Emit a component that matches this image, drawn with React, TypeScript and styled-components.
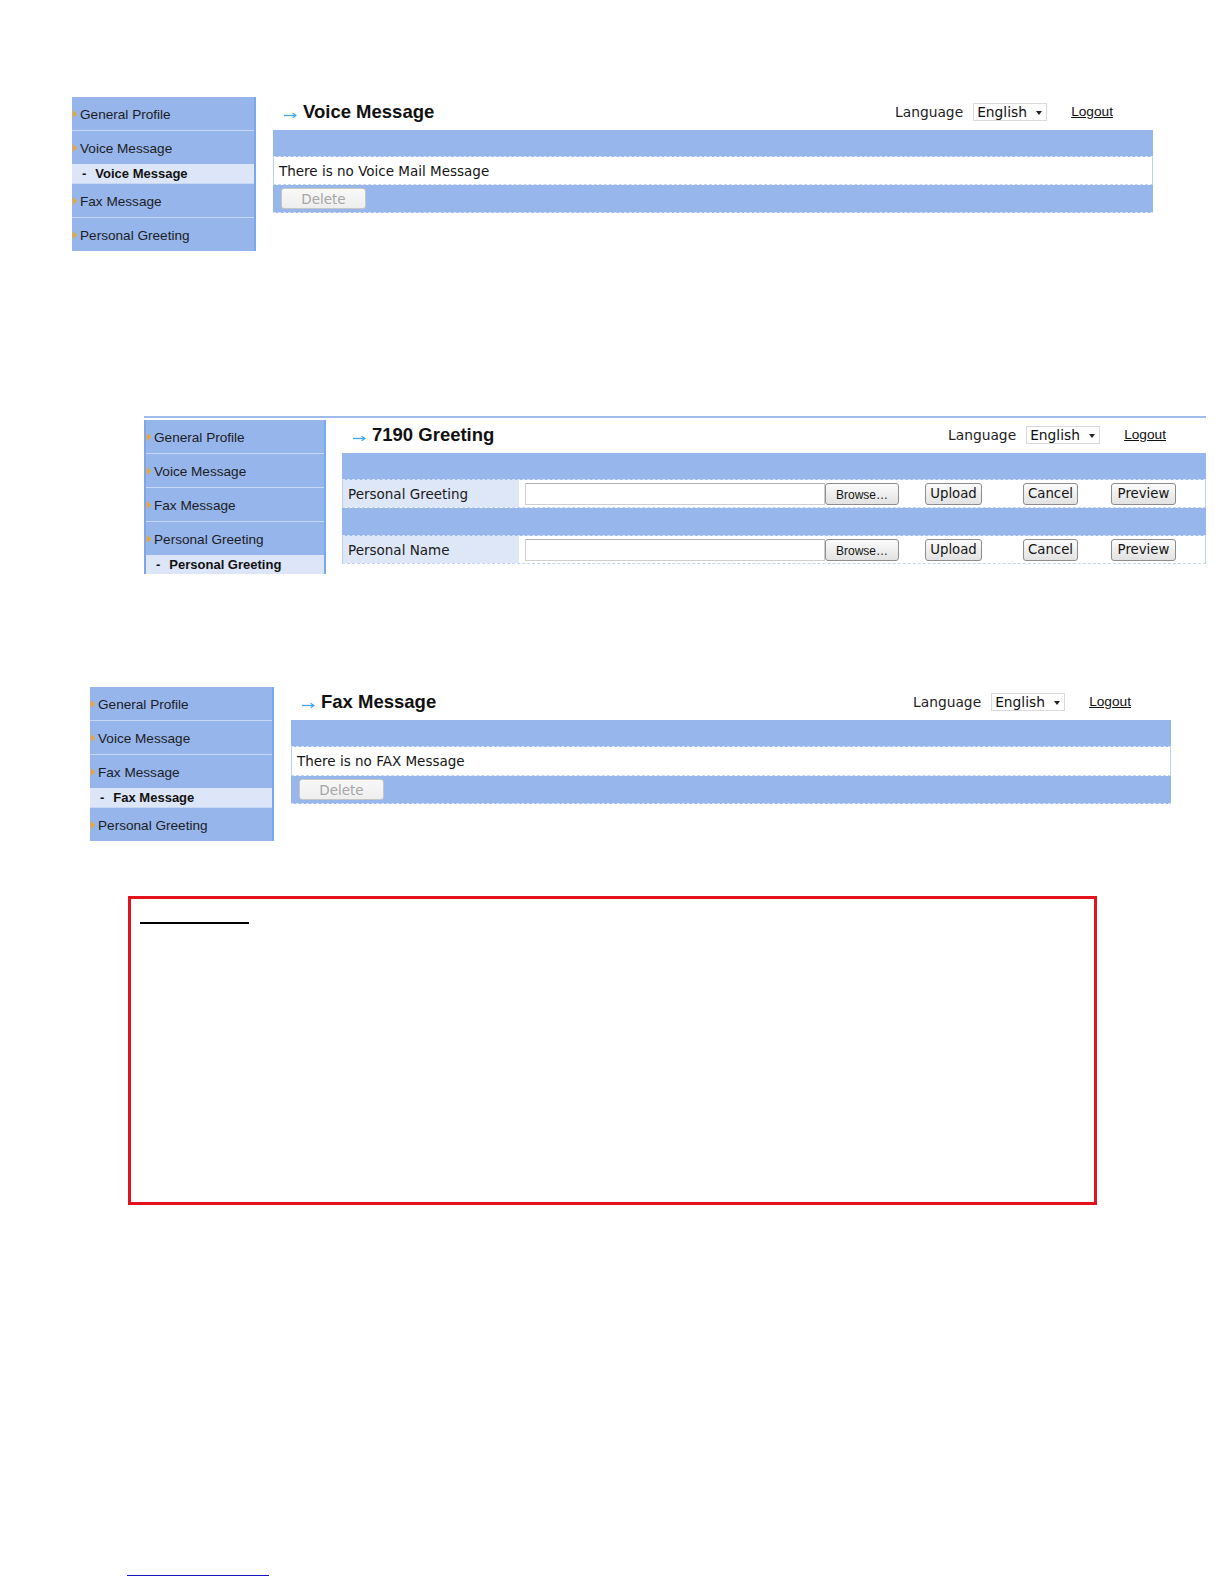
import styled, { createGlobalStyle } from "styled-components";

const GlobalStyle = createGlobalStyle`
  body {
    margin: 0;
    background: #ffffff;
    font-family: "DejaVu Sans", Verdana, sans-serif;
    color: #1a1a1a;
  }
`;

type MenuName = "General Profile" | "Voice Message" | "Fax Message" | "Personal Greeting";

const menu: MenuName[] = ["General Profile", "Voice Message", "Fax Message", "Personal Greeting"];

function App() {
  return (
    <Page>
      <GlobalStyle />

      <Panel $top={97} $left={72} $width={1081}>
        <SideMenu open="Voice Message" width={184} />
        <Main $gap={17}>
          <TopBar title="Voice Message" />
          <Band $h={27} />
          <DataRow $h={28}>
            <Message>There is no Voice Mail Message</Message>
          </DataRow>
          <Band $h={28}>
            <DeleteBtn disabled>Delete</DeleteBtn>
          </Band>
        </Main>
      </Panel>

      <Panel $top={165} $left={144} $width={1062} $rule>
        <SideMenu open="Personal Greeting" width={182} $edge />
        <Main $gap={16}>
          <TopBar title="7190 Greeting" />
          <Band $h={27} />
          <UploadRow label="Personal Greeting" />
          <Band $h={28} />
          <UploadRow label="Personal Name" />
        </Main>
      </Panel>

      <Panel $top={113} $left={90} $width={1081}>
        <SideMenu open="Fax Message" width={184} />
        <Main $gap={17}>
          <TopBar title="Fax Message" />
          <Band $h={27} />
          <DataRow $h={29}>
            <Message>There is no FAX Message</Message>
          </DataRow>
          <Band $h={28}>
            <DeleteBtn disabled>Delete</DeleteBtn>
          </Band>
        </Main>
      </Panel>

      <NoteBox>
        <NoteHeading />
      </NoteBox>

      <FootLink />
    </Page>
  );
}

function SideMenu({ open, width, $edge }: { open: MenuName; width: number; $edge?: boolean }) {
  return (
    <Sidebar $w={width} $edge={$edge}>
      {menu.map((name) => (
        <div key={name}>
          <MenuItem>{name}</MenuItem>
          {name === open && (
            <SubItem>
              <Dash>-</Dash>
              {name}
            </SubItem>
          )}
        </div>
      ))}
    </Sidebar>
  );
}

function TopBar({ title }: { title: string }) {
  return (
    <Header>
      <TitleArrow width="13" height="7" viewBox="0 0 13 7">
        <path d="M0 3.5H11.5" stroke="#3ea4e8" strokeWidth="1.3" fill="none" />
        <path d="M8.6 1.2L12 3.5L8.6 5.8" stroke="#3ea4e8" strokeWidth="1.2" fill="none" />
      </TitleArrow>
      <Title>{title}</Title>
      <LangLabel>Language</LangLabel>
      <LangSelect>
        English
        <Caret />
      </LangSelect>
      <Logout href="#">Logout</Logout>
    </Header>
  );
}

function UploadRow({ label }: { label: string }) {
  return (
    <DataRow $h={28}>
      <LabelCell>{label}</LabelCell>
      <FileInput />
      <BrowseBtn>Browse…</BrowseBtn>
      <ActionBtn $w={57} $ml={26}>Upload</ActionBtn>
      <ActionBtn $w={55} $ml={41}>Cancel</ActionBtn>
      <ActionBtn $w={65} $ml={33}>Preview</ActionBtn>
    </DataRow>
  );
}

export default App;

const Page = styled.div`
  width: 1224px;
  min-height: 1584px;
  display: flex;
  flex-direction: column;
`;

const Panel = styled.section<{ $top: number; $left: number; $width: number; $rule?: boolean }>`
  margin-top: ${(p) => p.$top}px;
  margin-left: ${(p) => p.$left}px;
  width: ${(p) => p.$width}px;
  display: flex;
  align-items: flex-start;
  ${(p) => p.$rule && "border-top: 2px solid #9fbdec; padding-top: 2px;"}
`;

const Sidebar = styled.nav<{ $w: number; $edge?: boolean }>`
  width: ${(p) => p.$w}px;
  flex-shrink: 0;
  box-sizing: border-box;
  border-right: 2px solid #78a8ee;
  ${(p) => p.$edge && "border-left: 2px solid #7fa6e4;"}
  display: flex;
  flex-direction: column;

  & > div + div > div:first-child {
    border-top: 1px solid #c6d8f6;
  }
`;

const MenuItem = styled.div`
  height: 32px;
  padding: 1px 0 0 1px;
  background: #96b5ea;
  display: flex;
  align-items: center;
  font-family: "Liberation Sans", Arial, sans-serif;
  font-size: 13.6px;
  color: #1c1c26;

  &::before {
    content: "";
    width: 0;
    height: 0;
    border-left: 4px solid #f3a521;
    border-top: 4px solid transparent;
    border-bottom: 4px solid transparent;
    margin-right: 3px;
  }
`;

const SubItem = styled.div`
  height: 19px;
  background: #dce6f8;
  display: flex;
  align-items: center;
  padding-left: 10px;
  font-family: "Liberation Sans", Arial, sans-serif;
  font-weight: bold;
  font-size: 13px;
  color: #111;
`;

const Dash = styled.span`
  margin-right: 9px;
`;

const Main = styled.div<{ $gap: number }>`
  flex: 1;
  margin-left: ${(p) => p.$gap}px;
  display: flex;
  flex-direction: column;
`;

const Header = styled.div`
  height: 33px;
  box-sizing: border-box;
  padding: 0 40px 4px 11px;
  display: flex;
  align-items: center;
`;

const TitleArrow = styled.svg`
  margin: 7px 6px 0 0;
`;

const Title = styled.h2`
  margin: 0;
  font-family: "Liberation Sans", Arial, sans-serif;
  font-weight: bold;
  font-size: 18.5px;
  line-height: 22px;
  color: #111;
`;

const LangLabel = styled.span`
  margin-left: auto;
  margin-right: 10px;
  font-size: 13.8px;
  color: #222;
`;

const LangSelect = styled.div`
  width: 74px;
  height: 18px;
  box-sizing: border-box;
  border: 1px solid #dadada;
  padding: 0 4px 0 3px;
  display: flex;
  align-items: center;
  justify-content: space-between;
  font-size: 13.8px;
  color: #111;
`;

const Caret = styled.span`
  width: 0;
  height: 0;
  border-top: 4px solid #222;
  border-left: 3.5px solid transparent;
  border-right: 3.5px solid transparent;
  margin-top: 2px;
`;

const Logout = styled.a`
  margin-left: 24px;
  font-family: "Liberation Sans", Arial, sans-serif;
  font-size: 13.7px;
  color: #111;
  text-decoration: underline;
`;

const Band = styled.div<{ $h: number }>`
  height: ${(p) => p.$h}px;
  box-sizing: border-box;
  background: #97b6ec;
  border-bottom: 1px dashed #d6e2f8;
  display: flex;
  align-items: center;
  padding-left: 8px;
`;

const DataRow = styled.div<{ $h: number }>`
  height: ${(p) => p.$h}px;
  box-sizing: border-box;
  background: #ffffff;
  border-left: 1px solid #bcd0f2;
  border-right: 1px solid #bcd0f2;
  border-bottom: 1px dashed #c4d5f3;
  display: flex;
  align-items: center;
`;

const Message = styled.span`
  padding-left: 5px;
  font-size: 13.5px;
  color: #151515;
`;

const DeleteBtn = styled.button`
  width: 85px;
  height: 21px;
  padding: 0;
  border: 1px solid #c6c6c6;
  border-radius: 3px;
  background: linear-gradient(#f8f8f8, #eeeeee);
  font-family: "DejaVu Sans", Verdana, sans-serif;
  font-size: 13.5px;
  color: #a6a6a6;
`;

const LabelCell = styled.div`
  width: 176px;
  height: 100%;
  box-sizing: border-box;
  padding-left: 5px;
  background: #dde7f8;
  display: flex;
  align-items: center;
  font-size: 13.5px;
  color: #1a1a1a;
`;

const FileInput = styled.div`
  width: 300px;
  height: 22px;
  box-sizing: border-box;
  margin-left: 6px;
  border: 1px solid #cfcfcf;
  border-top-color: #b4b4b4;
  background: #fff;
`;

const BtnBase = styled.button`
  height: 22px;
  padding: 0;
  border: 1px solid #8d8d8d;
  border-radius: 3px;
  background: linear-gradient(#fbfbfb, #e2e2e2);
  color: #151515;
`;

const BrowseBtn = styled(BtnBase)`
  width: 74px;
  padding-top: 3px;
  font-family: "Liberation Sans", Arial, sans-serif;
  font-size: 12px;
`;

const ActionBtn = styled(BtnBase)<{ $w: number; $ml: number }>`
  width: ${(p) => p.$w}px;
  margin-left: ${(p) => p.$ml}px;
  font-family: "DejaVu Sans", Verdana, sans-serif;
  font-size: 13.3px;
`;

const NoteBox = styled.div`
  margin: 55px 0 0 128px;
  width: 969px;
  height: 309px;
  box-sizing: border-box;
  border: 3px solid #e3121c;
  padding: 23px 0 0 9px;
`;

const NoteHeading = styled.div`
  width: 109px;
  border-bottom: 2px solid #000;
`;

const FootLink = styled.div`
  margin: 370px 0 0 127px;
  width: 142px;
  border-top: 1.5px solid #1616c4;
`;
